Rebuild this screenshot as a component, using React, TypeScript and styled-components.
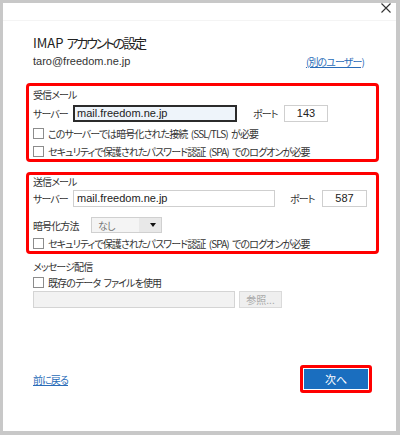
import styled, { createGlobalStyle, css } from "styled-components";

const GlobalStyle = createGlobalStyle`
  html, body {
    margin: 0;
    padding: 0;
    background: #c8c8c8;
  }
  body {
    font-family: "Noto Sans CJK JP", "Liberation Sans", sans-serif;
    font-feature-settings: "palt" 1;
    color: #333;
  }
`;

// 画面のUIフォントは幅が狭いので、字間を詰めて合わせる
const uiText = css`
  font-family: "Noto Sans CJK JP", sans-serif;
  font-feature-settings: "palt" 1;
  font-size: 10px;
  letter-spacing: -0.9px;
  word-spacing: 2px;
  white-space: nowrap;
`;

const Frame = styled.div`
  width: 400px;
  height: 435px;
  box-sizing: border-box;
  padding: 3px 4px 4px 3px;
  background: #c8c8c8;
`;

const Dialog = styled.div`
  height: 100%;
  background: #fff;
  display: flex;
  flex-direction: column;
`;

const TitleBar = styled.div`
  height: 17px;
  flex: none;
  display: flex;
  justify-content: flex-end;
  padding-right: 5px;
  border-bottom: 1px solid #f4f4f4;
`;

const CloseButton = styled.button`
  width: 10px;
  height: 10px;
  padding: 0;
  border: 0;
  background: none;
  display: flex;
`;

const Body = styled.div`
  padding: 12px 17px 0 23px;
  display: flex;
  flex-direction: column;
`;

const Header = styled.div`
  padding-left: 7px;
`;

const Title = styled.div`
  font-family: "Noto Sans CJK JP", sans-serif;
  font-size: 13px;
  line-height: 20px;
  color: #222;
  white-space: nowrap;
`;

const TitleJa = styled.span`
  font-feature-settings: "palt" 1;
  letter-spacing: -2.2px;
`;

const AccountRow = styled.div`
  display: flex;
  justify-content: space-between;
  align-items: center;
  height: 16px;
  padding-right: 15px;
`;

const Email = styled.span`
  font-family: "Liberation Sans", sans-serif;
  font-size: 11px;
  color: #333;
`;

const TextLink = styled.a`
  ${uiText};
  color: #2a6cb8;
  text-decoration: underline;
  cursor: pointer;
`;

const Group = styled.div<{ $top: number }>`
  margin-top: ${(p) => p.$top}px;
  border: 3px solid #ff0000;
  border-radius: 4px;
  padding: 1px 4px 0 4px;
  display: flex;
  flex-direction: column;
`;

const SectionTitle = styled.div<{ $lh?: number; $top?: number }>`
  ${uiText};
  margin-top: ${(p) => p.$top ?? 0}px;
  line-height: ${(p) => p.$lh ?? 16}px;
  color: #333;
`;

const FieldRow = styled.div<{ $top: number }>`
  margin-top: ${(p) => p.$top}px;
  display: flex;
  align-items: center;
`;

const Label = styled.span<{ $w: number }>`
  ${uiText};
  width: ${(p) => p.$w}px;
  flex: none;
  color: #333;
`;

const TextBox = styled.div<{ $w: number; $focus?: boolean; $center?: boolean }>`
  width: ${(p) => p.$w}px;
  height: 17px;
  box-sizing: border-box;
  flex: none;
  border: ${(p) => (p.$focus ? "2px solid #2b2b2b" : "1px solid #cfcfcf")};
  background: ${(p) => (p.$focus ? "#eef4fa" : "#fff")};
  padding: 0 ${(p) => (p.$focus ? 2 : 3)}px;
  font-family: "Liberation Sans", sans-serif;
  font-size: 11px;
  line-height: ${(p) => (p.$focus ? 13 : 15)}px;
  color: #222;
  text-align: ${(p) => (p.$center ? "center" : "left")};
  white-space: nowrap;
  overflow: hidden;
`;

const Spacer = styled.div<{ $w: number }>`
  width: ${(p) => p.$w}px;
  flex: none;
`;

const Select = styled.div`
  ${uiText};
  width: 71px;
  height: 16px;
  box-sizing: border-box;
  border: 1px solid #d0d0d0;
  background: linear-gradient(to right, #f4f4f4 68%, #e8e8e8 68%);
  display: flex;
  align-items: center;
  justify-content: space-between;
  padding: 0 5px 0 6px;
  color: #777;
`;

const Arrow = styled.span`
  width: 0;
  height: 0;
  border-left: 3px solid transparent;
  border-right: 3px solid transparent;
  border-top: 4px solid #111;
`;

const CheckRow = styled.label<{ $top: number; $h?: number }>`
  ${uiText};
  margin-top: ${(p) => p.$top}px;
  height: ${(p) => p.$h ?? 16}px;
  display: flex;
  align-items: center;
  color: #333;
`;

const CheckBox = styled.span`
  width: 11px;
  height: 11px;
  box-sizing: border-box;
  border: 1px solid #8c8c8c;
  background: #fff;
  flex: none;
  margin-right: 4px;
`;

const Plain = styled.div`
  padding-left: 7px;
  display: flex;
  flex-direction: column;
`;

const FileRow = styled.div`
  margin-top: 1px;
  display: flex;
  gap: 4px;
`;

const DisabledBox = styled.div`
  width: 202px;
  height: 17px;
  box-sizing: border-box;
  border: 1px solid #d4d4d4;
  background: #f2f2f2;
`;

const BrowseButton = styled.div`
  ${uiText};
  letter-spacing: 0;
  width: 43px;
  height: 17px;
  box-sizing: border-box;
  border: 1px solid #dadada;
  background: #efefef;
  line-height: 15px;
  text-align: center;
  color: #a8a8a8;
`;

const Footer = styled.div`
  margin-top: 57px;
  padding-left: 7px;
  padding-right: 7px;
  height: 28px;
  display: flex;
  justify-content: space-between;
  align-items: center;
`;

const FocusRing = styled.div`
  border: 3px solid #ff0000;
  border-radius: 3px;
  padding: 1px;
  background: #fff;
  display: flex;
`;

const PrimaryButton = styled.button`
  width: 64px;
  height: 20px;
  border: 0;
  padding: 0;
  background: #1a6ebf;
  color: #fff;
  font-family: "Noto Sans CJK JP", sans-serif;
  font-size: 11px;
  line-height: 20px;
`;

export default function App() {
  return (
    <>
      <GlobalStyle />
      <Frame>
        <Dialog>
          <TitleBar>
            <CloseButton aria-label="閉じる">
              <svg width="10" height="10" viewBox="0 0 10 10">
                <path d="M0.5 0.5 L9.5 9.5 M9.5 0.5 L0.5 9.5" stroke="#333" strokeWidth="1.1" />
              </svg>
            </CloseButton>
          </TitleBar>
          <Body>
            <Header>
              <Title>
                IMAP <TitleJa>アカウントの設定</TitleJa>
              </Title>
              <AccountRow>
                <Email>taro@freedom.ne.jp</Email>
                <TextLink>(別のユーザー)</TextLink>
              </AccountRow>
            </Header>

            <Group $top={14}>
              <SectionTitle>受信メール</SectionTitle>
              <FieldRow $top={2}>
                <Label $w={40}>サーバー</Label>
                <TextBox $w={164} $focus>mail.freedom.ne.jp</TextBox>
                <Spacer $w={16} />
                <Label $w={31}>ポート</Label>
                <TextBox $w={44} $center>143</TextBox>
              </FieldRow>
              <CheckRow $top={3}>
                <CheckBox />
                このサーバーでは暗号化された接続 (SSL/TLS) が必要
              </CheckRow>
              <CheckRow $top={2}>
                <CheckBox />
                セキュリティで保護されたパスワード認証 (SPA) でのログオンが必要
              </CheckRow>
            </Group>

            <Group $top={10}>
              <SectionTitle $lh={12}>送信メール</SectionTitle>
              <FieldRow $top={2}>
                <Label $w={40}>サーバー</Label>
                <TextBox $w={202}>mail.freedom.ne.jp</TextBox>
                <Spacer $w={15} />
                <Label $w={32}>ポート</Label>
                <TextBox $w={45} $center>587</TextBox>
              </FieldRow>
              <FieldRow $top={10}>
                <Label $w={58}>暗号化方法</Label>
                <Select>
                  なし
                  <Arrow />
                </Select>
              </FieldRow>
              <CheckRow $top={2}>
                <CheckBox />
                セキュリティで保護されたパスワード認証 (SPA) でのログオンが必要
              </CheckRow>
            </Group>

            <Plain>
              <SectionTitle $top={5}>メッセージ配信</SectionTitle>
              <CheckRow $top={0} $h={15}>
                <CheckBox />
                既存のデータ ファイルを使用
              </CheckRow>
              <FileRow>
                <DisabledBox />
                <BrowseButton>参照...</BrowseButton>
              </FileRow>
            </Plain>

            <Footer>
              <TextLink>前に戻る</TextLink>
              <FocusRing>
                <PrimaryButton>次へ</PrimaryButton>
              </FocusRing>
            </Footer>
          </Body>
        </Dialog>
      </Frame>
    </>
  );
}
